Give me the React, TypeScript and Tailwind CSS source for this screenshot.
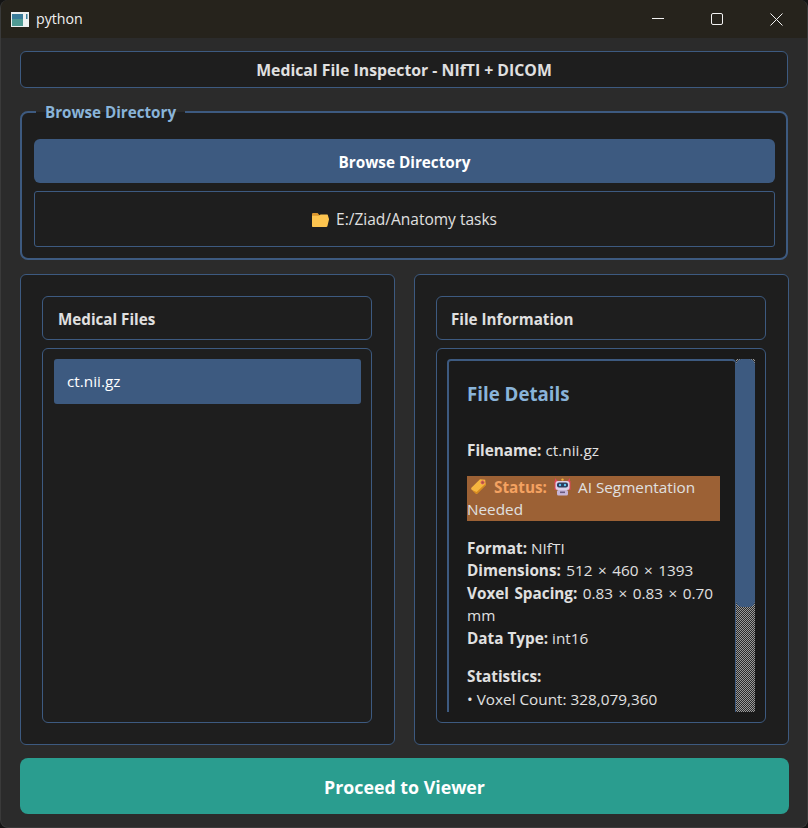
import React from 'react';

const font = "font-['Open_Sans','Noto_Sans',sans-serif]";

const FolderEmoji = () => (
    <svg width="17" height="16" viewBox="0 0 17 16" className="shrink-0">
        <path d="M0 2.2C0 1.5.6 1 1.2 1h4.4l2.2 2.4h6.6c.7 0 1.2.5 1.2 1.2V7H0z" fill="#d9962e" />
        <path d="M0 14V3.8h6.6l2-1.2h6.2c.7 0 1.2.5 1.2 1.2L17 7v.6l-1.6 6.7c-.2.5-.6.7-1.2.7H1c-.6 0-1-.4-1-1z" fill="#fcc44f" />
    </svg>
);

const TagEmoji = () => (
    <svg width="17" height="17" viewBox="0 0 17 17" className="shrink-0">
        <path d="M10 1.2l5.2.6.6 5.2-8.6 8.6a1 1 0 0 1-1.4 0L1.4 11.2a1 1 0 0 1 0-1.4z" fill="#f5b63f" />
        <path d="M2 12l4.2 3.8a1 1 0 0 0 1 0L15.8 7l-.2-1.4L6.6 14z" fill="#d68a1f" />
        <circle cx="12.6" cy="4.4" r="1.5" fill="#9c6135" stroke="#e2506a" strokeWidth="1" />
    </svg>
);

const RobotEmoji = () => (
    <svg width="17" height="18" viewBox="0 0 17 18" className="shrink-0">
        <path d="M1 0l3.5 4H1z" fill="#e0455a" />
        <path d="M16 0l-3.5 4H16z" fill="#e0455a" />
        <circle cx="8.5" cy="1.6" r="1.2" fill="#f5b63f" />
        <rect x="0.5" y="3" width="2" height="9" fill="#e0455a" />
        <rect x="14.5" y="3" width="2" height="9" fill="#e0455a" />
        <rect x="1.5" y="3" width="14" height="9" rx="2.5" fill="#ddd0e8" />
        <rect x="3" y="4.5" width="11" height="5" rx="2" fill="#2d3a5c" />
        <circle cx="6" cy="7" r="1.2" fill="#5cc4f0" />
        <circle cx="11" cy="7" r="1.2" fill="#5cc4f0" />
        <rect x="3" y="12" width="11" height="5.5" rx="1.5" fill="#c6b6d8" />
        <rect x="6" y="13.5" width="5" height="1.6" fill="#6a5a80" />
    </svg>
);

const AppIcon = () => (
    <svg width="18" height="15" viewBox="0 0 18 15" className="shrink-0">
        <rect x="0" y="0" width="18" height="15" fill="#eef1f2" />
        <rect x="1" y="2" width="11" height="12" fill="#4f9a94" />
        <rect x="1" y="2" width="11" height="5" fill="#3a7c9a" />
        <rect x="15" y="2" width="1.5" height="5" fill="#3a7c9a" />
    </svg>
);

// caption buttons, drawn 12x12 like the windows ones
const CaptionIcons = () => (
    <div className="ml-auto flex items-center gap-[47px] pr-[24px]">
        <svg width="12" height="12" viewBox="0 0 12 12" fill="none" stroke="#f2f2f2" strokeWidth="1">
            <path d="M0 5.5h12" />
        </svg>
        <svg width="12" height="12" viewBox="0 0 12 12" fill="none" stroke="#f2f2f2" strokeWidth="1">
            <rect x="0.5" y="0.5" width="11" height="11" rx="1.5" />
        </svg>
        <svg width="13" height="13" viewBox="0 0 13 13" fill="none" stroke="#f2f2f2" strokeWidth="1">
            <path d="M0.5 0.5l12 12M12.5 0.5l-12 12" />
        </svg>
    </div>
);

const App: React.FC = () => {
    return (
        <div className={`w-[808px] h-[828px] bg-[#141414] overflow-hidden ${font}`}>
            <div className="w-full h-full bg-[#2b2b2b] rounded-lg overflow-hidden flex flex-col border-l border-r border-b border-[#3a3a3a]">
                {/* titlebar */}
                <div className="h-[38px] shrink-0 bg-[#26231c] flex items-center pl-[10px]">
                    <AppIcon />
                    <span className="ml-[7px] text-[14.2px] text-[#f0f0f0]">python</span>
                    <CaptionIcons />
                </div>

                <div className="flex-1 flex flex-col pl-[19px] pr-[18px] pt-[13px]">
                    <div className="h-[37px] mr-[1px] shrink-0 bg-[#1e1e1e] border border-[#3d5a80] rounded-md flex items-center justify-center pt-[2px] text-[15.8px] font-bold text-[#e0e0e0]">
                        Medical File Inspector - NIfTI + DICOM
                    </div>

                    {/* browse group */}
                    <div className="relative mt-[23px] mr-[1px] h-[149px] shrink-0 bg-[#1e1e1e] border-2 border-[#3d5a80] rounded-lg pl-[12px] pr-[11px] pt-[26px]">
                        <span className="absolute left-[14px] top-[-11px] bg-[linear-gradient(#2b2b2b_10px,#1e1e1e_10px)] px-[9px] h-[20px] flex items-center text-[15.2px] font-bold text-[#89b4d9]">
                            Browse Directory
                        </span>
                        <div className="h-[44px] bg-[#3d5a80] rounded-md flex items-center justify-center pt-[2px] text-[15.3px] font-bold text-white">
                            Browse Directory
                        </div>
                        <div className="mt-[8px] h-[56px] border border-[#3d5a80] rounded-[3px] flex items-center justify-center gap-[7px] pt-[2px] text-[15.5px] text-[#e0e0e0]">
                            <FolderEmoji />
                            E:/Ziad/Anatomy tasks
                        </div>
                    </div>

                    <div className="mt-[14px] flex gap-[19px] h-[471px] shrink-0">
                        {/* left panel */}
                        <div className="w-[375px] bg-[#1e1e1e] border border-[#3d5a80] rounded-md pl-[21px] pr-[22px] pt-[21px]">
                            <div className="h-[44px] border border-[#3d5a80] rounded-md flex items-center pl-[15px] pt-[2px] text-[15.2px] font-bold text-[#e0e0e0]">
                                Medical Files
                            </div>
                            <div className="mt-[8px] h-[375px] border border-[#3d5a80] rounded-md pl-[11px] pr-[10px] pt-[10px]">
                                <div className="h-[45px] bg-[#3d5a80] rounded-[3px] flex items-center pl-[13px] text-[15.3px] text-white">
                                    ct.nii.gz
                                </div>
                            </div>
                        </div>

                        {/* right panel */}
                        <div className="w-[375px] bg-[#1e1e1e] border border-[#3d5a80] rounded-md pl-[21px] pr-[22px] pt-[21px]">
                            <div className="h-[44px] border border-[#3d5a80] rounded-md flex items-center pl-[14px] pt-[2px] text-[15.2px] font-bold text-[#e0e0e0]">
                                File Information
                            </div>
                            <div className="mt-[8px] h-[375px] bg-[#1a1a1a] border border-[#3d5a80] rounded-md pl-[10px] pt-[10px] flex">
                                <div className="w-[289px] h-[353px] overflow-hidden border-l-2 border-t-2 border-r border-[#3d5a80] rounded-t-[4px] pl-[18px] pr-[15px] text-[15.3px] leading-[22.5px] text-[#e0e0e0]">
                                    <div className="mt-[19px] text-[18.7px] leading-[28px] font-bold text-[#89b4d9]">File Details</div>
                                    <p className="mt-[31px]"><b>Filename:</b> ct.nii.gz</p>
                                    <div className="mt-[14px] bg-[#9c6135]">
                                        <div className="flex items-center gap-[7px] pl-[3px]">
                                            <TagEmoji />
                                            <b className="text-[#f4a261]">Status:</b>
                                            <RobotEmoji />
                                            <span>AI Segmentation</span>
                                        </div>
                                        <div>Needed</div>
                                    </div>
                                    <p className="mt-[16px]"><b>Format:</b> NIfTI</p>
                                    <p className="[word-spacing:1.5px]"><b>Dimensions:</b> 512 × 460 × 1393</p>
                                    <p className="[word-spacing:1.5px]"><b>Voxel Spacing:</b> 0.83 × 0.83 × 0.70 mm</p>
                                    <p><b>Data Type:</b> int16</p>
                                    <p className="mt-[16px]"><b>Statistics:</b></p>
                                    <p>• Voxel Count: 328,079,360</p>
                                </div>
                                <div className="w-[19px] h-[353px] bg-[repeating-conic-gradient(#9a9a9a_0%_25%,#2a2a2a_0%_50%)] bg-[length:2px_2px]">
                                    <div className="h-[248px] bg-[#3d5a80] rounded-md" />
                                </div>
                            </div>
                        </div>
                    </div>

                    <div className="mt-[13px] h-[56px] shrink-0 bg-[#2a9d8f] rounded-lg flex items-center justify-center pt-[2px] text-[17.8px] font-bold text-white">
                        Proceed to Viewer
                    </div>
                </div>
            </div>
        </div>
    );
};

export default App;
